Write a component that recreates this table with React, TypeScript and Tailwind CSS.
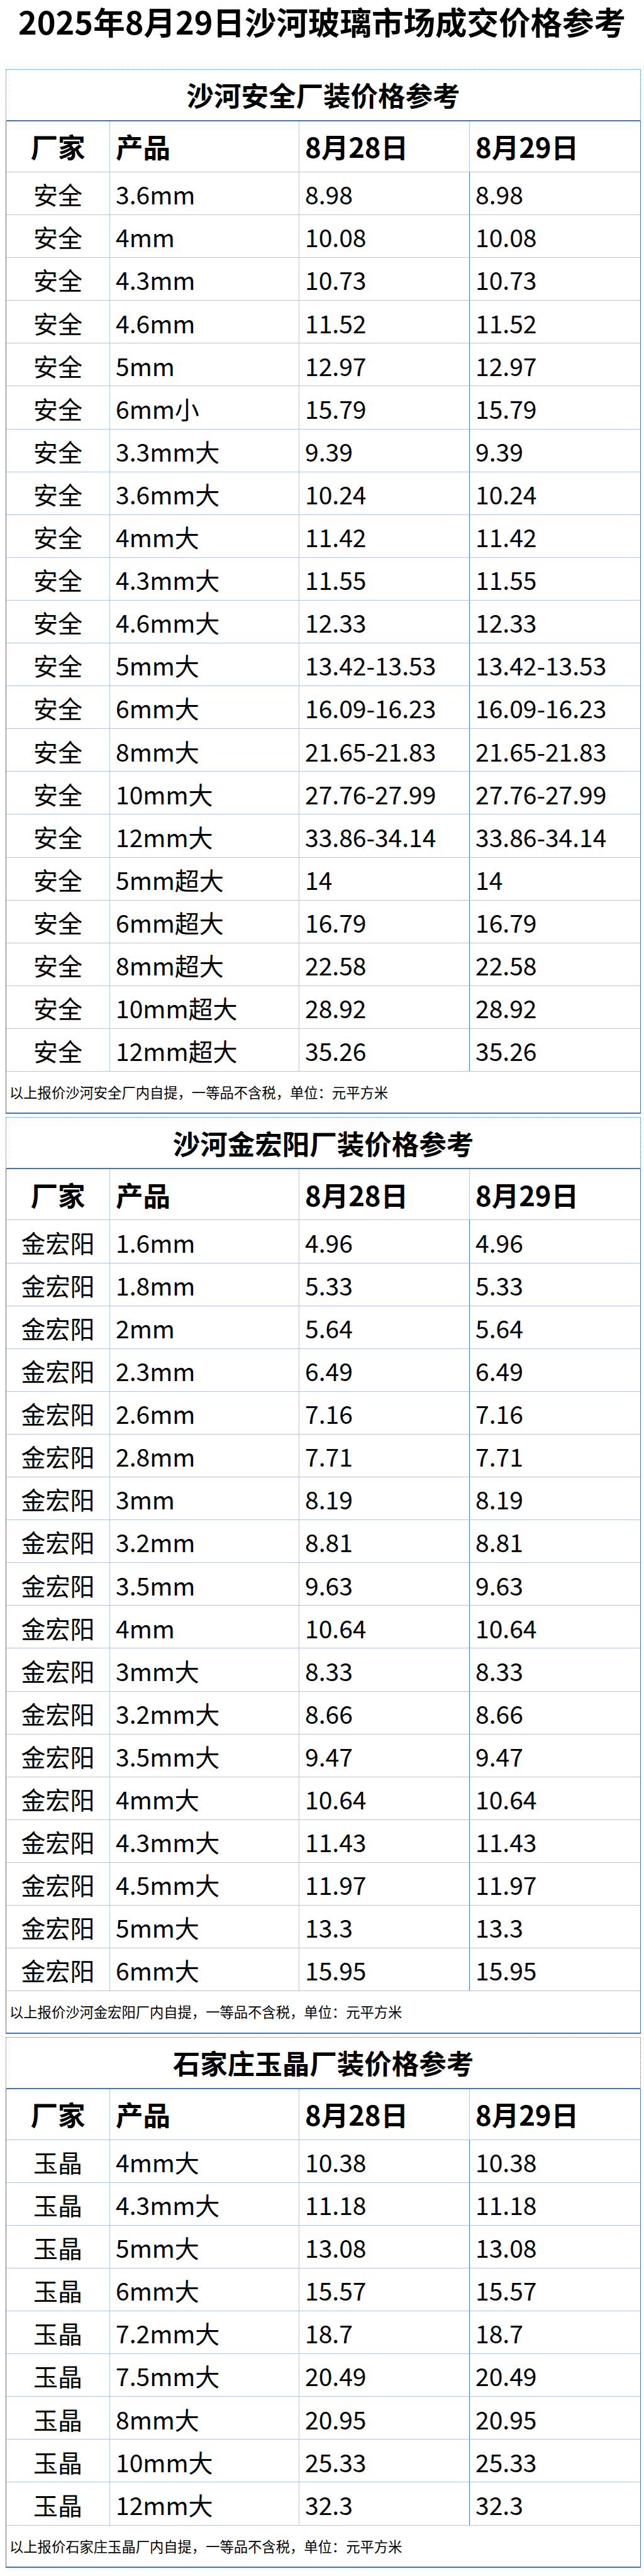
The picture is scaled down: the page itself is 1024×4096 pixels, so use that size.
import React from "react";

type Row = [string, string, string];

interface Section {
  title: string;
  maker: string;
  note: string;
  rows: Row[];
}

const sections: Section[] = [
  {
    title: "沙河安全厂装价格参考",
    maker: "安全",
    note: "以上报价沙河安全厂内自提，一等品不含税，单位：元平方米",
    rows: [
      ["3.6mm", "8.98", "8.98"],
      ["4mm", "10.08", "10.08"],
      ["4.3mm", "10.73", "10.73"],
      ["4.6mm", "11.52", "11.52"],
      ["5mm", "12.97", "12.97"],
      ["6mm小", "15.79", "15.79"],
      ["3.3mm大", "9.39", "9.39"],
      ["3.6mm大", "10.24", "10.24"],
      ["4mm大", "11.42", "11.42"],
      ["4.3mm大", "11.55", "11.55"],
      ["4.6mm大", "12.33", "12.33"],
      ["5mm大", "13.42-13.53", "13.42-13.53"],
      ["6mm大", "16.09-16.23", "16.09-16.23"],
      ["8mm大", "21.65-21.83", "21.65-21.83"],
      ["10mm大", "27.76-27.99", "27.76-27.99"],
      ["12mm大", "33.86-34.14", "33.86-34.14"],
      ["5mm超大", "14", "14"],
      ["6mm超大", "16.79", "16.79"],
      ["8mm超大", "22.58", "22.58"],
      ["10mm超大", "28.92", "28.92"],
      ["12mm超大", "35.26", "35.26"],
    ],
  },
  {
    title: "沙河金宏阳厂装价格参考",
    maker: "金宏阳",
    note: "以上报价沙河金宏阳厂内自提，一等品不含税，单位：元平方米",
    rows: [
      ["1.6mm", "4.96", "4.96"],
      ["1.8mm", "5.33", "5.33"],
      ["2mm", "5.64", "5.64"],
      ["2.3mm", "6.49", "6.49"],
      ["2.6mm", "7.16", "7.16"],
      ["2.8mm", "7.71", "7.71"],
      ["3mm", "8.19", "8.19"],
      ["3.2mm", "8.81", "8.81"],
      ["3.5mm", "9.63", "9.63"],
      ["4mm", "10.64", "10.64"],
      ["3mm大", "8.33", "8.33"],
      ["3.2mm大", "8.66", "8.66"],
      ["3.5mm大", "9.47", "9.47"],
      ["4mm大", "10.64", "10.64"],
      ["4.3mm大", "11.43", "11.43"],
      ["4.5mm大", "11.97", "11.97"],
      ["5mm大", "13.3", "13.3"],
      ["6mm大", "15.95", "15.95"],
    ],
  },
  {
    title: "石家庄玉晶厂装价格参考",
    maker: "玉晶",
    note: "以上报价石家庄玉晶厂内自提，一等品不含税，单位：元平方米",
    rows: [
      ["4mm大", "10.38", "10.38"],
      ["4.3mm大", "11.18", "11.18"],
      ["5mm大", "13.08", "13.08"],
      ["6mm大", "15.57", "15.57"],
      ["7.2mm大", "18.7", "18.7"],
      ["7.5mm大", "20.49", "20.49"],
      ["8mm大", "20.95", "20.95"],
      ["10mm大", "25.33", "25.33"],
      ["12mm大", "32.3", "32.3"],
    ],
  },
];

const PriceTable = ({ section, first }: { section: Section; first: boolean }) => {
  return (
    <div className={first ? "mx-[9px] w-[1010px]" : "mx-[9px] mt-[5px] w-[1010px]"}>
      {/* 标题 */}
      <div className="flex h-[83px] items-center justify-center border-x border-t border-b-2 border-dotted border-x-[#4472c4] border-t-[#4472c4] border-b-[#4472c4] [border-bottom-style:solid]">
        <span className="text-[43.5px] font-bold leading-none">{section.title}</span>
      </div>

      <div className="border-x border-b-2 border-[#4472c4]">
        {/* 表头 */}
        <div className="grid h-[81px] grid-cols-[164px_301px_271px_1fr] border-b border-[#b4c6e7] text-[43.5px] font-bold">
          <div className="flex items-center justify-center">厂家</div>
          <div className="flex items-center border-l border-[#b4c6e7] pl-[9px]">产品</div>
          <div className="flex items-center border-l border-[#b4c6e7] pl-[9px]">8月28日</div>
          <div className="flex items-center border-l border-[#b4c6e7] pl-[9px]">8月29日</div>
        </div>

        {section.rows.map(([product, d28, d29], i) => (
          <div
            key={i}
            className="grid h-[68.1px] grid-cols-[164px_301px_271px_1fr] border-b border-[#b4c6e7] text-[39px]"
          >
            <div className="flex items-center justify-center pt-[2px]">{section.maker}</div>
            <div className="flex items-center border-l border-[#b4c6e7] pl-[9px] pt-[2px]">{product}</div>
            <div className="flex items-center border-l border-[#b4c6e7] pl-[9px] pt-[2px]">{d28}</div>
            <div className="flex items-center border-l border-[#4472c4] pl-[9px] pt-[2px]">{d29}</div>
          </div>
        ))}

        {/* 备注 */}
        <div className="flex h-[65.5px] items-center pl-[5px] text-[22.3px]">{section.note}</div>
      </div>
    </div>
  );
};

export default function App() {
  return (
    <div className="w-[1024px] bg-white pb-[9px] font-['Noto_Sans_CJK_SC',sans-serif] text-black">
      <div className="h-[110px]">
        <h1 className="h-[67px] text-center text-[50.5px] font-bold leading-[67px]">
          2025年8月29日沙河玻璃市场成交价格参考
        </h1>
      </div>
      {sections.map((s, i) => (
        <PriceTable key={s.title} section={s} first={i === 0} />
      ))}
    </div>
  );
}
